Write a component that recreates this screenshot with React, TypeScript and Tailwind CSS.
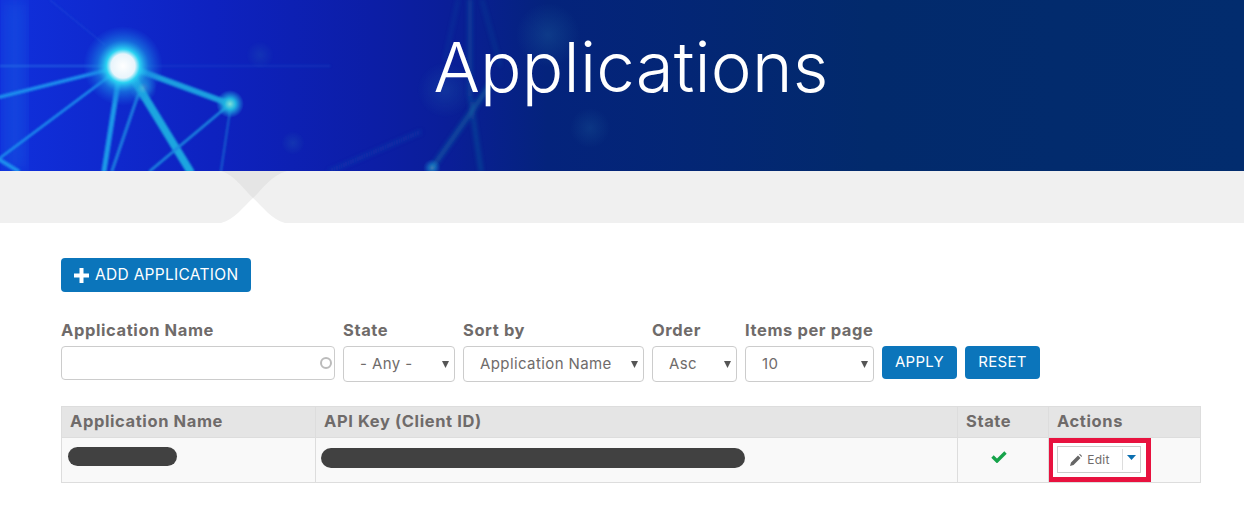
const font = { fontFamily: "Inter, 'Noto Sans', sans-serif" };

function HeroArt() {
  return (
    <svg className="absolute inset-0 h-full w-full" viewBox="0 0 1244 171" preserveAspectRatio="none">
      <defs>
        <linearGradient id="base" x1="0" x2="1" y1="0" y2="0">
          <stop offset="0" stopColor="#1030dc" />
          <stop offset="0.17" stopColor="#0e22c0" />
          <stop offset="0.3" stopColor="#0c1ea6" />
          <stop offset="0.36" stopColor="#0a1e98" />
          <stop offset="0.44" stopColor="#04237c" />
          <stop offset="0.7" stopColor="#022a6c" />
          <stop offset="1" stopColor="#022c6e" />
        </linearGradient>
        <radialGradient id="glow">
          <stop offset="0" stopColor="#ffffff" />
          <stop offset="0.3" stopColor="#e8f4fb" />
          <stop offset="0.42" stopColor="#2bd2f2" />
          <stop offset="0.65" stopColor="#1a8fe6" stopOpacity="0.6" />
          <stop offset="1" stopColor="#1a6fe6" stopOpacity="0" />
        </radialGradient>
        <radialGradient id="small">
          <stop offset="0" stopColor="#7fe0d8" />
          <stop offset="0.4" stopColor="#20b4e0" />
          <stop offset="1" stopColor="#20a0e0" stopOpacity="0" />
        </radialGradient>
        <radialGradient id="faint">
          <stop offset="0" stopColor="#2a80b0" stopOpacity="0.55" />
          <stop offset="1" stopColor="#2a80b0" stopOpacity="0" />
        </radialGradient>
        <filter id="b1"><feGaussianBlur stdDeviation="1" /></filter>
        <filter id="b2"><feGaussianBlur stdDeviation="2" /></filter>
        <filter id="b8"><feGaussianBlur stdDeviation="8" /></filter>
      </defs>
      <rect width="1244" height="171" fill="url(#base)" />
      <rect x="4" width="22" height="171" fill="#1b6fe8" opacity="0.35" filter="url(#b8)" />
      <g filter="url(#b1)" fill="none" strokeLinecap="round">
        <path d="M123 66L0 97" stroke="#1e90ee" strokeWidth="3.5" />
        <path d="M123 66L0 158" stroke="#1e90ee" strokeWidth="2.5" />
        <path d="M120 70L104 171" stroke="#1f9ae8" strokeWidth="5" />
        <path d="M138 95L112 171" stroke="#1f7fe0" strokeWidth="3" />
        <path d="M127 68L190 171" stroke="#1aa6e0" strokeWidth="8" />
        <path d="M127 66L230 104" stroke="#1a9fe0" strokeWidth="6" />
        <path d="M230 104L150 171" stroke="#1c88e0" strokeWidth="2.5" />
        <path d="M231 104L221 171" stroke="#1c78d8" strokeWidth="2" opacity="0.7" />
        <path d="M0 66H123" stroke="#2a80ea" strokeWidth="1.5" opacity="0.7" />
        <path d="M123 66H330" stroke="#2a70e0" strokeWidth="1" opacity="0.4" />
        <path d="M50 0L105 45" stroke="#2a70e0" strokeWidth="0.8" opacity="0.6" />
        <path d="M0 160L18 171" stroke="#1e90ee" strokeWidth="4" />
      </g>
      <g filter="url(#b2)" fill="none" strokeLinecap="round">
        <path d="M330 171L420 132" stroke="#1c50b0" strokeWidth="3" opacity="0.45" />
        <path d="M432 168L490 85" stroke="#1a7fa8" strokeWidth="4" opacity="0.55" />
        <path d="M470 0V95L481 171" stroke="#1a7fa8" strokeWidth="3" opacity="0.45" />
        <path d="M482 0L500 65" stroke="#1a7fa8" strokeWidth="2" opacity="0.3" />
        <path d="M458 0L445 60" stroke="#1a7fa8" strokeWidth="2" opacity="0.25" />
      </g>
      <circle cx="123" cy="66" r="40" fill="url(#glow)" />
      <circle cx="230" cy="104" r="14" fill="url(#small)" />
      <circle cx="143" cy="88" r="14" fill="url(#small)" opacity="0.4" />
      <circle cx="260" cy="55" r="14" fill="url(#faint)" opacity="0.35" />
      <circle cx="293" cy="143" r="12" fill="url(#faint)" opacity="0.4" />
      <circle cx="548" cy="35" r="32" fill="url(#faint)" opacity="0.45" />
      <circle cx="445" cy="90" r="28" fill="url(#faint)" opacity="0.4" />
      <circle cx="590" cy="128" r="20" fill="url(#faint)" opacity="0.35" />
      <circle cx="432" cy="168" r="9" fill="url(#small)" opacity="0.4" />
    </svg>
  );
}

function Notch() {
  return (
    <svg className="absolute left-[221px] top-0" width="66" height="52" viewBox="0 0 66 52">
      <path d="M0 0C14 4 22 18 32 27C42 18 50 4 66 0Z" fill="#e5e5e5" />
      <path d="M0 52C14 48 22 36 32 27C42 36 50 48 64 52Z" fill="#ffffff" />
    </svg>
  );
}

function Field({ label, width, value }: { label: string; width: string; value: string }) {
  return (
    <label className={`flex flex-col ${width}`}>
      <span className="mb-[6px] whitespace-nowrap text-[16.5px] leading-[20px] font-bold tracking-[0.6px] text-[#6f6b6a]">{label}</span>
      <span className="relative block">
        <select
          defaultValue={value}
          className="block h-[36px] w-full appearance-none rounded-[4px] border border-[#cccccc] bg-white pl-[16px] text-[15px] tracking-[0.4px] text-[#6f6b6a]"
        >
          <option>{value}</option>
        </select>
        <svg className="absolute right-[6px] top-[15px]" width="7" height="7" viewBox="0 0 7 7">
          <path d="M0 0H7L3.5 7Z" fill="#555555" />
        </svg>
      </span>
    </label>
  );
}

export default function App() {
  return (
    <div className="h-[516px] w-[1244px] overflow-hidden bg-white" style={font}>
      <div className="relative flex h-[171px] justify-center overflow-hidden">
        <HeroArt />
        <h1 className="relative ml-[18px] mt-[30px] text-[69px] leading-[74px] font-light tracking-[0.2px] text-white">Applications</h1>
      </div>
      <div className="relative h-[52px] bg-[#f0f0f0]">
        <Notch />
      </div>

      <div className="px-[61px] pt-[35px]">
        <button className="flex h-[34px] w-[190px] items-center rounded-[4px] bg-[#0b75bb] pl-[13px] text-[15.5px] tracking-[0.3px] text-white">
          <svg className="mr-[6px]" width="15" height="15" viewBox="0 0 15 15">
            <path d="M5.5 0H9.5V5.5H15V9.5H9.5V15H5.5V9.5H0V5.5H5.5Z" fill="#ffffff" />
          </svg>
          ADD APPLICATION
        </button>

        <div className="mt-[28px] flex items-start gap-[8px]">
          <label className="flex w-[274px] flex-col">
            <span className="mb-[6px] text-[16.5px] leading-[20px] font-bold tracking-[0.6px] text-[#6f6b6a]">Application Name</span>
            <span className="relative block">
              <input className="block h-[34px] w-full rounded-[4px] border border-[#cccccc] bg-white" />
              <span className="absolute right-[3px] top-[11px] h-[12px] w-[12px] rounded-full border-2 border-[#bbbbbb]" />
            </span>
          </label>
          <Field label="State" width="w-[112px]" value="- Any -" />
          <Field label="Sort by" width="w-[181px]" value="Application Name" />
          <Field label="Order" width="w-[85px]" value="Asc" />
          <Field label="Items per page" width="w-[129px]" value="10" />
          <button className="mt-[26px] h-[33px] w-[75px] rounded-[4px] bg-[#0b75bb] text-[15px] tracking-[0.3px] text-white">APPLY</button>
          <button className="mt-[26px] h-[33px] w-[75px] rounded-[4px] bg-[#0b75bb] text-[15px] tracking-[0.3px] text-white">RESET</button>
        </div>

        <table className="mt-[24px] w-[1140px] table-fixed border-collapse border border-[#dddddd] text-left">
          <thead>
            <tr className="h-[31px] bg-[#e5e5e5] text-[16.5px] font-bold tracking-[0.6px] text-[#6f6b6a]">
              <th className="w-[254px] border border-[#dddddd] pb-[2px] pl-[8px]">Application Name</th>
              <th className="w-[642px] border border-[#dddddd] pb-[2px] pl-[8px]">API Key (Client ID)</th>
              <th className="w-[91px] border border-[#dddddd] pb-[2px] pl-[8px]">State</th>
              <th className="border border-[#dddddd] pb-[2px] pl-[8px]">Actions</th>
            </tr>
          </thead>
          <tbody>
            <tr className="h-[44px] bg-[#f9f9f9]">
              <td className="border border-[#dddddd] pb-[7px] pl-[6px] align-middle">
                <div className="h-[19px] w-[109px] rounded-full bg-[#414141]" />
              </td>
              <td className="border border-[#dddddd] pb-[5px] pl-[5px] align-middle">
                <div className="h-[20px] w-[424px] rounded-full bg-[#414141]" />
              </td>
              <td className="border border-[#dddddd] pb-[7px] pr-[8px] align-middle">
                <svg className="mx-auto" width="16" height="13" viewBox="0 0 16 13">
                  <path d="M1.5 6.5L6 11L14.5 2.5" fill="none" stroke="#16a34a" strokeWidth="3.4" />
                </svg>
              </td>
              <td className="border border-[#dddddd] p-0 align-top">
                <div className="-ml-px flex h-[44px] w-[103px] items-start border-[5px] border-[#e8123f] bg-white pl-[4px] pt-[3px]">
                  <div className="flex h-[27px] w-[84px] shrink-0 items-center border border-[#cccccc] bg-white">
                    <span className="flex w-[64px] items-center justify-center gap-[5px] text-[12px] tracking-[0.3px] text-[#6f6b6a]">
                      <svg width="12" height="12" viewBox="0 0 12 12">
                        <path d="M0 12L1 8.5L8 1.5L10.5 4L3.5 11Z M9 0.5L10 0L12 2L11.5 3Z" fill="#666666" />
                      </svg>
                      Edit
                    </span>
                    <span className="h-[21px] w-px bg-[#dddddd]" />
                    <svg className="ml-[4px] mb-[5px]" width="9" height="5" viewBox="0 0 9 5">
                      <path d="M0 0H9L4.5 5Z" fill="#0b6fb0" />
                    </svg>
                  </div>
                </div>
              </td>
            </tr>
          </tbody>
        </table>
      </div>
    </div>
  );
}
